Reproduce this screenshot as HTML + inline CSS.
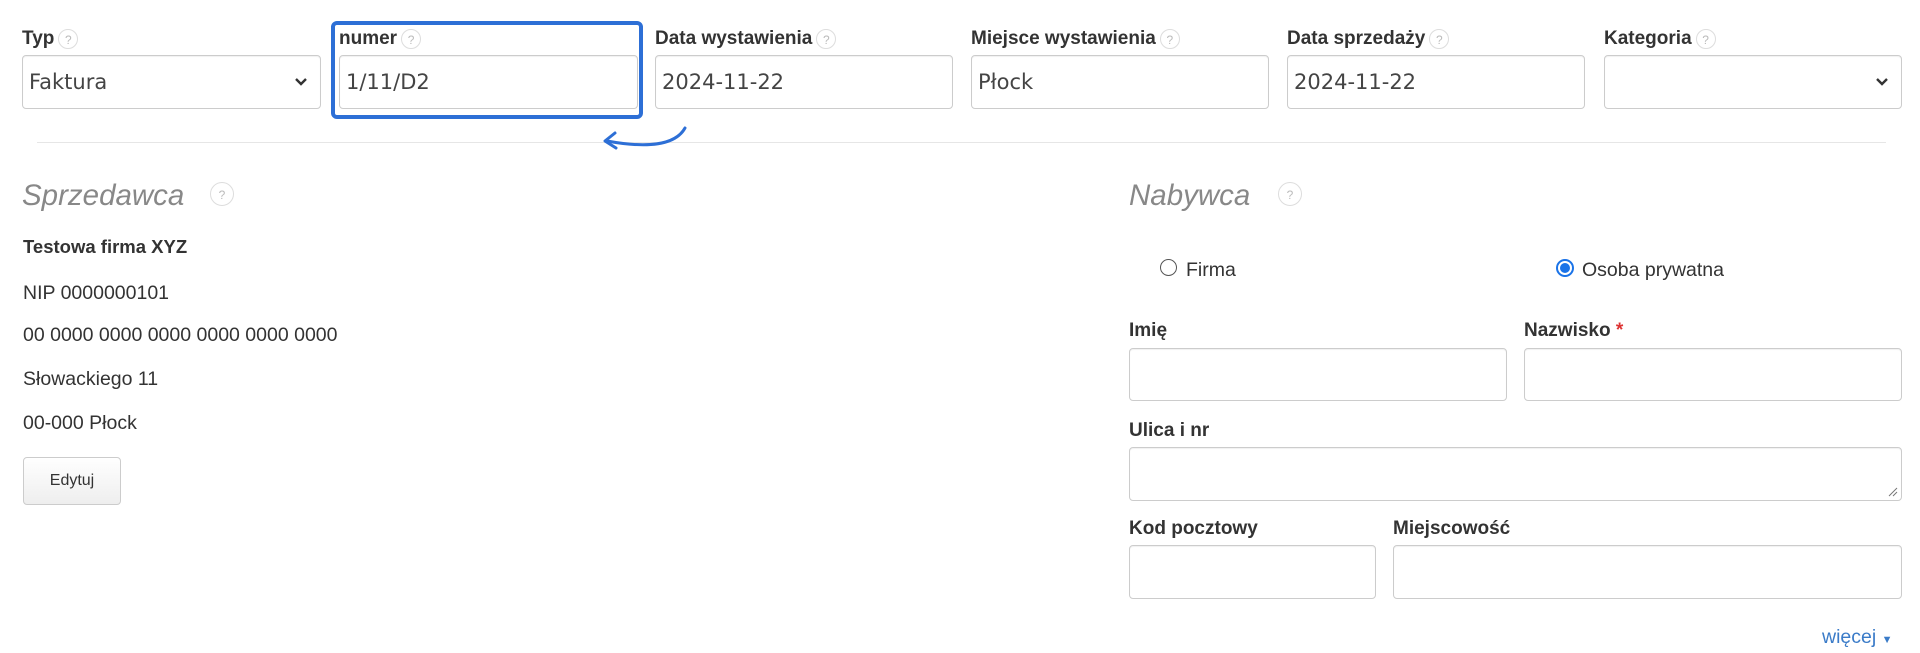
<!DOCTYPE html>
<html><head><meta charset="utf-8"><style>
body{margin:0;width:1920px;height:653px;background:#fff;font-family:"Liberation Sans",Arial,sans-serif;color:#333;position:relative;overflow:hidden}
.a{position:absolute}
.lbl{position:absolute;font-weight:bold;font-size:19px;color:#333;white-space:nowrap}
.q{display:inline-block;width:20px;height:20px;border:1px solid #ddd;border-radius:50%;color:#bbb;font-size:12px;font-weight:normal;text-align:center;line-height:20px;vertical-align:middle;margin-left:4px;box-sizing:border-box}
.inp{position:absolute;border:1px solid #ccc;border-radius:4px;box-sizing:border-box;background:#fff;font-family:"DejaVu Sans",sans-serif;font-size:21px;color:#444;padding-left:6px;display:flex;align-items:center;box-shadow:inset 0 1px 1px rgba(0,0,0,.06)}
.chev{position:absolute;right:12px;top:50%;margin-top:-7px}
.t{position:absolute;font-size:19.5px;color:#333;white-space:nowrap}
.h{position:absolute;font-size:29.5px;font-style:italic;color:#888;}
</style></head><body>
<div class="lbl" style="left:22px;top:28px">Typ<span class="q">?</span></div>
<div class="inp" style="left:22px;top:55px;width:299px;height:54px">Faktura<svg class="chev" width="14" height="14" viewBox="0 0 14 14"><path d="M2 4l5 5 5-5" fill="none" stroke="#333" stroke-width="2.4"/></svg></div>

<div class="a" style="left:331px;top:21px;width:312px;height:98px;border:4px solid #2d6fd6;border-radius:6px;box-sizing:border-box"></div>
<div class="lbl" style="left:339px;top:28px">numer<span class="q">?</span></div>
<div class="inp" style="left:339px;top:55px;width:299px;height:54px">1/11/D2</div>

<div class="lbl" style="left:655px;top:28px">Data wystawienia<span class="q">?</span></div>
<div class="inp" style="left:655px;top:55px;width:298px;height:54px">2024-11-22</div>
<div class="lbl" style="left:971px;top:28px">Miejsce wystawienia<span class="q">?</span></div>
<div class="inp" style="left:971px;top:55px;width:298px;height:54px">Płock</div>
<div class="lbl" style="left:1287px;top:28px">Data sprzedaży<span class="q">?</span></div>
<div class="inp" style="left:1287px;top:55px;width:298px;height:54px">2024-11-22</div>
<div class="lbl" style="left:1604px;top:28px">Kategoria<span class="q">?</span></div>
<div class="inp" style="left:1604px;top:55px;width:298px;height:54px"><svg class="chev" width="14" height="14" viewBox="0 0 14 14"><path d="M2 4l5 5 5-5" fill="none" stroke="#333" stroke-width="2.4"/></svg></div>

<div class="a" style="left:37px;top:142px;width:1849px;height:1px;background:#e6e6e6"></div>
<svg class="a" style="left:595px;top:124px" width="100" height="34" viewBox="0 0 100 34"><path d="M90 4C80 22 50 24 12 17" fill="none" stroke="#2d6fd6" stroke-width="3" stroke-linecap="round"/><path d="M20 9L10 17 21 24" fill="none" stroke="#2d6fd6" stroke-width="3" stroke-linecap="round" stroke-linejoin="round"/></svg>

<div class="h" style="left:22px;top:179px">Sprzedawca</div>
<span class="q a" style="left:206px;top:182px;width:24px;height:24px;line-height:24px">?</span>
<div class="t" style="left:23px;top:236px;font-weight:bold;font-size:18.5px">Testowa firma XYZ</div>
<div class="t" style="left:23px;top:282px">NIP 0000000101</div>
<div class="t" style="left:23px;top:324px">00 0000 0000 0000 0000 0000 0000</div>
<div class="t" style="left:23px;top:368px">Słowackiego 11</div>
<div class="t" style="left:23px;top:412px">00-000 Płock</div>
<div class="a" style="left:23px;top:457px;width:98px;height:48px;border:1px solid #ccc;border-radius:4px;background:linear-gradient(#fff,#eee);box-sizing:border-box;font-size:16px;text-align:center;line-height:46px;color:#333">Edytuj</div>

<div class="h" style="left:1129px;top:179px">Nabywca</div>
<span class="q a" style="left:1274px;top:182px;width:24px;height:24px;line-height:24px">?</span>
<div class="a" style="left:1160px;top:259px;width:17px;height:17px;border:1.5px solid #555;border-radius:50%;box-sizing:border-box"></div>
<div class="t" style="left:1186px;top:259px">Firma</div>
<div class="a" style="left:1556px;top:259px;width:18px;height:18px;border:2px solid #1a73e8;border-radius:50%;box-sizing:border-box;padding:2px"><div style="width:10px;height:10px;border-radius:50%;background:#1a73e8"></div></div>
<div class="t" style="left:1582px;top:259px">Osoba prywatna</div>

<div class="lbl" style="left:1129px;top:320px">Imię</div>
<div class="lbl" style="left:1524px;top:320px">Nazwisko <span style="color:#d33">*</span></div>
<div class="inp" style="left:1129px;top:348px;width:378px;height:53px"></div>
<div class="inp" style="left:1524px;top:348px;width:378px;height:53px"></div>
<div class="lbl" style="left:1129px;top:420px">Ulica i nr</div>
<div class="inp" style="left:1129px;top:447px;width:773px;height:54px"><svg class="a" style="right:3px;bottom:3px" width="10" height="10"><path d="M1 9L9 1M5 9L9 5" stroke="#777"/></svg></div>
<div class="lbl" style="left:1129px;top:518px">Kod pocztowy</div>
<div class="lbl" style="left:1393px;top:518px">Miejscowość</div>
<div class="inp" style="left:1129px;top:545px;width:247px;height:54px"></div>
<div class="inp" style="left:1393px;top:545px;width:509px;height:54px"></div>
<div class="t" style="left:1822px;top:626px;color:#3a7bc8">więcej <span style="font-size:11px">▼</span></div>
</body></html>
